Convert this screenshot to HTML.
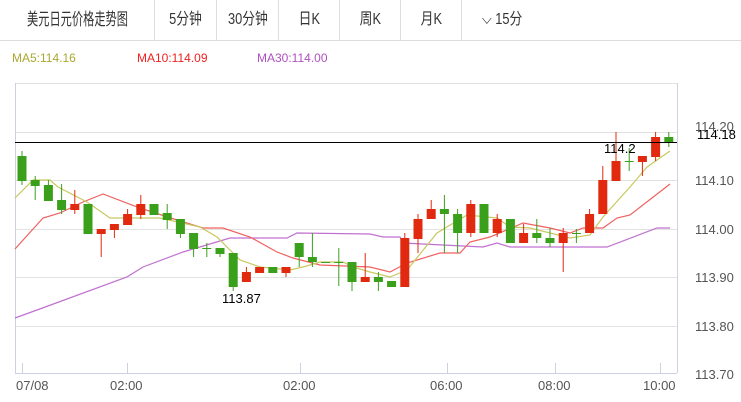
<!DOCTYPE html>
<html><head><meta charset="utf-8"><style>
body{margin:0;width:741px;height:402px;overflow:hidden;background:#fff;font-family:"Liberation Sans","Noto Sans CJK SC",sans-serif;}
.hd{position:absolute;left:0;top:0;width:741px;height:40px;border-bottom:1px solid #ddd;}
.c{position:absolute;top:0;height:40px;line-height:40px;text-align:center;font-size:16px;color:#333;border-left:1px solid #ddd;}
.c span{display:inline-block;transform:scaleX(0.8);white-space:nowrap;}
.ma{position:absolute;top:51px;font-size:12px;}
</style></head><body>
<div class="hd">
<div class="c" style="left:0;width:154px;border-left:none;font-size:17px"><span style="transform:scaleX(0.66)">美元日元价格走势图</span></div>
<div class="c" style="left:154px;width:61px"><span>5分钟</span></div>
<div class="c" style="left:216px;width:61px"><span>30分钟</span></div>
<div class="c" style="left:278px;width:61px"><span>日K</span></div>
<div class="c" style="left:339px;width:61px"><span>周K</span></div>
<div class="c" style="left:400px;width:61px"><span>月K</span></div>
<div class="c" style="left:461px;width:80px"><span>⌵ 15分</span></div>
</div>
<div class="ma" style="left:12px;color:#a8a830">MA5:114.16</div>
<div class="ma" style="left:137px;color:#f02020">MA10:114.09</div>
<div class="ma" style="left:257px;color:#b050c0">MA30:114.00</div>
<svg id="sv" width="741" height="402" style="position:absolute;left:0;top:0" font-family="Liberation Sans, sans-serif">
<g stroke="#e2e2e2" stroke-width="1">
<line x1="15" y1="83.5" x2="677" y2="83.5"/>
<line x1="15" y1="132.5" x2="677" y2="132.5"/>
<line x1="15" y1="180.5" x2="677" y2="180.5"/>
<line x1="15" y1="229.5" x2="677" y2="229.5"/>
<line x1="15" y1="277.5" x2="677" y2="277.5"/>
<line x1="15" y1="326.5" x2="677" y2="326.5"/>
</g>
<g stroke="#ccd0e0" stroke-width="1">
<line x1="15.5" y1="83" x2="15.5" y2="373"/>
<line x1="677.5" y1="83" x2="677.5" y2="373"/>
<line x1="15" y1="373.5" x2="677" y2="373.5"/>
<line x1="22.5" y1="363" x2="22.5" y2="373"/>
<line x1="127.5" y1="363" x2="127.5" y2="373"/>
<line x1="300.5" y1="363" x2="300.5" y2="373"/>
<line x1="447.5" y1="363" x2="447.5" y2="373"/>
<line x1="555.5" y1="363" x2="555.5" y2="373"/>
<line x1="660.5" y1="363" x2="660.5" y2="373"/>
</g>
<g font-size="13" fill="#555">
<text x="695" y="131">114.20</text>
<text x="695" y="185">114.10</text>
<text x="695" y="234">114.00</text>
<text x="695" y="282">113.90</text>
<text x="695" y="331">113.80</text>
<text x="695" y="379">113.70</text>
<text x="16" y="390">07/08</text>
<text x="110" y="390">02:00</text>
<text x="283" y="390">02:00</text>
<text x="430" y="390">06:00</text>
<text x="538" y="390">08:00</text>
<text x="643" y="390">10:00</text>
</g>
<polyline fill="none" stroke="#c070d0" stroke-width="1.2" points="15,318 37,310 127,277 143,267 183,252 230,238 287,238 297,233 370,234 383,237 400,237 403,243 483,247 497,243 510,247 607,247 657,228 670,228"/>
<polyline fill="none" stroke="#f06060" stroke-width="1.2" points="15,249 43,218 60,213 83,202 103,194 140,208 177,220 203,228 223,228 250,237 277,252 293,258 320,265 370,267 390,272 407,263 440,253 460,253 470,242 490,237 523,223 550,228 570,233 583,228 603,228 617,218 630,215 670,184"/>
<polyline fill="none" stroke="#c8c860" stroke-width="1.2" points="15,198 33,180 50,180 58,187 87,202 110,218 160,218 200,227 217,237 240,260 260,267 290,270 303,267 320,262 343,262 353,267 370,272 390,277 407,270 437,233 467,215 497,218 510,227 530,228 570,238 590,235 603,217 630,187 647,167 670,151"/>
<g id="c"></g>
<line x1="15" y1="142.5" x2="677" y2="142.5" stroke="#000" stroke-width="1"/>
<text x="697" y="139" font-size="13" fill="#000">114.18</text>
<text x="604" y="153" font-size="13" fill="#000">114.2</text>
<text x="222" y="303" font-size="13" fill="#000">113.87</text>
</svg>
<script>
var d=[[156,181,151,185,0],[180,186,176,200,0],[185,201,180,201,0],[200,210,184,214,0],[204,210,190,214,1],[204,234,204,234,0],[229,234,229,257,1],[224,230,224,238,1],[214,225,209,225,1],[204,215,195,219,1],[204,215,204,215,0],[213,220,204,229,0],[219,234,219,238,0],[233,249,233,257,0],[248,249,243,257,0],[248,254,248,257,0],[253,287,253,291,0],[272,282,267,282,1],[267,273,267,273,1],[267,273,267,273,0],[267,273,267,277,1],[243,257,243,267,0],[257,262,233,267,0],[262,263,262,263,0],[262,263,248,286,0],[262,282,262,291,0],[277,282,253,282,1],[277,282,272,291,0],[281,287,281,287,0],[238,287,233,287,1],[219,239,214,253,1],[209,219,200,219,1],[209,214,195,253,0],[214,233,209,253,0],[204,233,200,237,1],[204,233,204,233,0],[219,233,214,237,1],[219,243,219,243,0],[233,243,224,243,1],[233,238,219,243,0],[238,243,228,247,0],[233,243,228,272,1],[233,234,229,243,0],[214,233,209,233,1],[180,214,166,214,1],[161,181,132,181,1],[161,162,148,171,0],[156,162,156,176,1],[137,157,132,161,1],[137,142,132,147,0]];
var g=document.getElementById('c'),NS='http://www.w3.org/2000/svg';
d.forEach(function(a,i){var x=22+i*13.2,col=a[4]?'#e0290e':'#3aa01c';
var l=document.createElementNS(NS,'line');l.setAttribute('x1',x);l.setAttribute('x2',x);l.setAttribute('y1',a[2]);l.setAttribute('y2',a[3]);l.setAttribute('stroke',col);g.appendChild(l);
var r=document.createElementNS(NS,'rect');r.setAttribute('x',x-4.5);r.setAttribute('y',a[0]);r.setAttribute('width',9);r.setAttribute('height',Math.max(1,a[1]-a[0]));r.setAttribute('fill',col);g.appendChild(r);});
</script>
</body></html>
